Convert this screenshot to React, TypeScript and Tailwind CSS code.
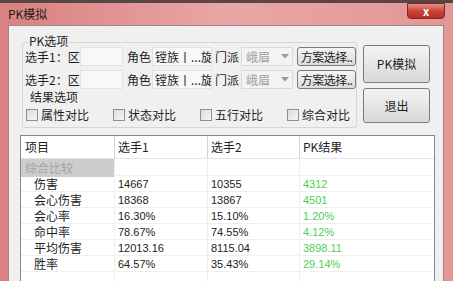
import React from "react";

const cjk = "font-['Noto_Sans_CJK_SC',sans-serif]";
const num = "font-['Liberation_Sans','Noto_Sans_CJK_SC',sans-serif]";

function Field({ w, text, muted }: { w: string; text?: string; muted?: boolean }) {
  return (
    <div
      className={`${w} shrink-0 h-[19px] flex items-center px-[2px] border border-[#e2e2e2] bg-[#f8f8f8] text-[12px] leading-none whitespace-nowrap overflow-hidden ${
        muted ? "text-[#9a9a9a]" : "text-[#222]"
      }`}
    >
      {text}
    </div>
  );
}

function PlayerRow({ n }: { n: number }) {
  return (
    <div className="flex items-center h-[19px] text-[12px] text-[#1e1e1e] leading-none whitespace-nowrap">
      <span className="w-[55px] shrink-0">选手{n}：区</span>
      <Field w="w-[43px]" />
      <span className="ml-[4px] w-[25px] shrink-0">角色</span>
      <Field w="w-[60px]" text="镗族丨...旋" />
      <span className="ml-[3px] w-[26px] shrink-0">门派</span>
      <div className="w-[52px] shrink-0 h-[19px] flex items-center justify-between pl-[4px] pr-[3px] border border-[#dadada] bg-[#f3f3f3] text-[#a0a0a0]">
        <span>峨眉</span>
        <svg width="8" height="5" viewBox="0 0 8 5">
          <path d="M0 0h8L4 4.5z" fill="#9a9a9a" />
        </svg>
      </div>
      <button className="ml-[4px] w-[59px] shrink-0 h-[19px] px-0 rounded-[3px] border border-[#7a7a7a] bg-gradient-to-b from-[#f4f4f4] to-[#dcdcdc] text-[12px] tracking-[-0.5px] leading-none text-[#1e1e1e]">
        方案选择..
      </button>
    </div>
  );
}

function Check({ label }: { label: string }) {
  return (
    <div className="w-[87px] shrink-0 flex items-center gap-[3px] text-[12px] text-[#1e1e1e] leading-none">
      <span className="w-[12px] h-[12px] border border-[#8e8f8f] bg-gradient-to-br from-[#dcdcdc] to-[#f6f6f6]" />
      <span className="whitespace-nowrap">{label}</span>
    </div>
  );
}

const rows = [
  ["伤害", "14667", "10355", "4312"],
  ["会心伤害", "18368", "13867", "4501"],
  ["会心率", "16.30%", "15.10%", "1.20%"],
  ["命中率", "78.67%", "74.55%", "4.12%"],
  ["平均伤害", "12013.16", "8115.04", "3898.11"],
  ["胜率", "64.57%", "35.43%", "29.14%"],
];

const cols = "grid grid-cols-[94px_93px_92px_1fr]";

export default function App() {
  return (
    <div className={`${cjk} relative w-[453px] h-[281px] overflow-hidden bg-gradient-to-r from-[#d98080] via-[#eaa6a6] to-[#e39696]`}>
      <div className="h-[3px] bg-[#5a4545]" />
      <div className="h-[22px] flex items-center pl-[8px] text-[12px] text-[#1a1a1a]">PK模拟</div>
      <div className="absolute top-[3px] right-[8px] w-[38px] h-[16px] rounded-b-[4px] border border-[#7a2a2a] bg-gradient-to-b from-[#e89080] via-[#c8443a] to-[#b83020] flex items-center justify-center text-white text-[11px] font-bold leading-none">
        x
      </div>
      <div className="ml-[8px] mr-[9px] h-[256px] overflow-hidden bg-[#f0f0f0] border border-b-0 border-[#9c8a8a] pl-[11px] pt-[16px]">
        <div className="flex gap-[6px]">
          <div className="relative ml-[2px] w-[335px] h-[86px] border border-[#d6d6d6] rounded-[3px] px-[2px] pt-[4px]">
            <span className="absolute left-[5px] -top-[9px] px-[1px] bg-[#f0f0f0] text-[12px] leading-[14px] text-[#1e1e1e]">
              PK选项
            </span>
            <PlayerRow n={1} />
            <div className="mt-[4px]">
              <PlayerRow n={2} />
            </div>
            <div className="pl-[5px] mt-[1px] h-[14px] text-[12px] leading-[14px] text-[#1e1e1e]">结果选项</div>
            <div className="flex mt-[5px] pl-[1px]">
              <Check label="属性对比" />
              <Check label="状态对比" />
              <Check label="五行对比" />
              <Check label="综合对比" />
            </div>
          </div>
          <div className="flex flex-col gap-[5px] pt-[3px]">
            <button className="w-[67px] h-[38px] rounded-[3px] border border-[#7a7a7a] bg-gradient-to-b from-[#f4f4f4] to-[#d8d8d8] text-[12px] text-[#1e1e1e]">
              PK模拟
            </button>
            <button className="w-[67px] h-[35px] rounded-[3px] border border-[#7a7a7a] bg-gradient-to-b from-[#f4f4f4] to-[#d8d8d8] text-[12px] text-[#1e1e1e]">
              退出
            </button>
          </div>
        </div>
        <div className="mt-[7px] w-[415px] h-[160px] bg-white border border-[#828790]">
          <div className={`${cols} h-[23px] text-[12px] text-[#1e1e1e] border-b border-[#e5e5e5]`}>
            <div className="pl-[4px] flex items-center border-r border-[#d5d5d5]">项目</div>
            <div className="pl-[3px] flex items-center border-r border-[#d5d5d5]">选手1</div>
            <div className="pl-[3px] flex items-center border-r border-[#d5d5d5]">选手2</div>
            <div className="pl-[3px] flex items-center">PK结果</div>
          </div>
          <div className={`${cols} h-[16px] text-[12px]`}>
            <div className="pl-[4px] flex items-center bg-[#cdcdcd] text-[#a4a4a4] border-r border-[#efefef]">综合比较</div>
            <div className="border-r border-[#efefef]" />
            <div className="border-r border-[#efefef]" />
            <div />
          </div>
          {rows.map(([label, a, b, r]) => (
            <div key={label} className={`${cols} h-[16px] border-t border-[#efefef]`}>
              <div className="pl-[13px] flex items-center text-[12px] text-[#1e1e1e] border-r border-[#efefef] leading-none">{label}</div>
              <div className={`${num} pl-[3px] flex items-center text-[11px] text-[#222] border-r border-[#efefef]`}>{a}</div>
              <div className={`${num} pl-[3px] flex items-center text-[11px] text-[#222] border-r border-[#efefef]`}>{b}</div>
              <div className={`${num} pl-[3px] flex items-center text-[11px] text-[#4fcf4f]`}>{r}</div>
            </div>
          ))}
          <div className={`${cols} h-[16px] border-t border-[#efefef]`}>
            <div className="border-r border-[#efefef]" />
            <div className="border-r border-[#efefef]" />
            <div className="border-r border-[#efefef]" />
            <div />
          </div>
        </div>
      </div>
    </div>
  );
}
